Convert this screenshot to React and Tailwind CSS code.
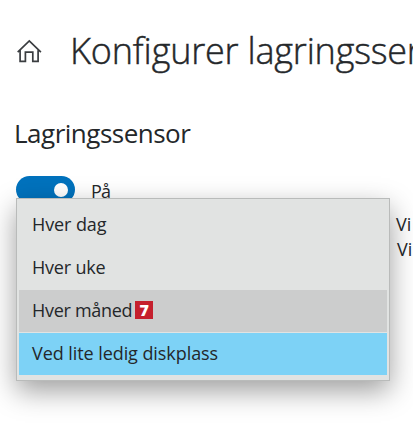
import React, { useState } from 'react';

const options = [
  { id: 'day', label: 'Hver dag', spacing: 'tracking-[-0.1px]' },
  { id: 'week', label: 'Hver uke', spacing: 'tracking-[-0.2px]' },
  { id: 'month', label: 'Hver måned', spacing: 'tracking-[-0.3px]', step: 7 },
  { id: 'low', label: 'Ved lite ledig diskplass', spacing: 'tracking-[-0.07px]' },
];

const rowStyles = {
  month: 'bg-[#cccdcd]',
  low: 'bg-[#7dd2f6]',
};

const HomeIcon = () => (
  <svg width="26" height="26" viewBox="0 0 26 26" fill="none" stroke="#3a3d40" strokeWidth="1.7">
    <path d="M1.7 13.2 13.3 1.9l11.6 11.3M4.1 11.2v11.2h5.3v-9.2h7.4v9.2h5.3V11.2" />
  </svg>
);

const App = () => {
  const [selected, setSelected] = useState('low');

  return (
    <div className="relative w-[413px] h-[425px] overflow-hidden bg-white text-[#24272a] font-['Open_Sans','Noto_Sans',sans-serif]">
      <header className="flex items-center pl-[16px] pt-[28px]">
        <span className="mt-px shrink-0">
          <HomeIcon />
        </span>
        <h1 className="ml-[28px] whitespace-nowrap text-[36px] leading-[46px] font-light tracking-[-0.2px] [-webkit-text-stroke:0.45px_#24272a]">
          Kon<span className="tracking-normal">fi</span>gurer lagringssensor
        </h1>
      </header>

      <h2 className="mt-[41px] ml-[14px] text-[26px] leading-[36px] tracking-[-0.5px]">Lagringssensor</h2>

      <div className="mt-[25px] ml-[16px] flex h-[27px] items-center">
        <button type="button" className="flex h-[27px] w-[59px] items-center justify-end rounded-full bg-[#0072bd] pr-[7px]">
          <span className="size-[14px] rounded-full bg-white" />
        </button>
        <span className="mt-[2px] ml-[16px] text-[18px] leading-[24px] tracking-[-0.9px]">På</span>
      </div>

      <div className="mt-[9px] ml-[396px] whitespace-nowrap text-[18px] leading-[25px]">
        <p>Vi</p>
        <p className="pl-px">Vi</p>
      </div>

      {/* Open dropdown lies over the settings below the switch */}
      <ul className="absolute top-[198px] left-[16px] h-[183px] w-[374px] border border-[#b9bbba] bg-[#e1e3e2] px-[2px] pt-[5px] shadow-[0_10px_26px_rgba(0,0,0,0.38)]">
        {options.map((option) => (
          <li
            key={option.id}
            onClick={() => setSelected(option.id)}
            aria-selected={option.id === selected}
            className={`mb-px flex h-[42px] items-center pl-[13px] text-[18px] leading-[24px] ${rowStyles[option.id] || ''}`}
          >
            <span className={`mb-[2px] ${option.spacing}`}>{option.label}</span>
            {option.step && (
              <span className="ml-[3px] mb-[2px] flex size-[18px] items-center justify-center bg-[#c5202e] text-[16px] leading-[18px] font-extrabold text-white">
                {option.step}
              </span>
            )}
          </li>
        ))}
      </ul>
    </div>
  );
};

export default App;
